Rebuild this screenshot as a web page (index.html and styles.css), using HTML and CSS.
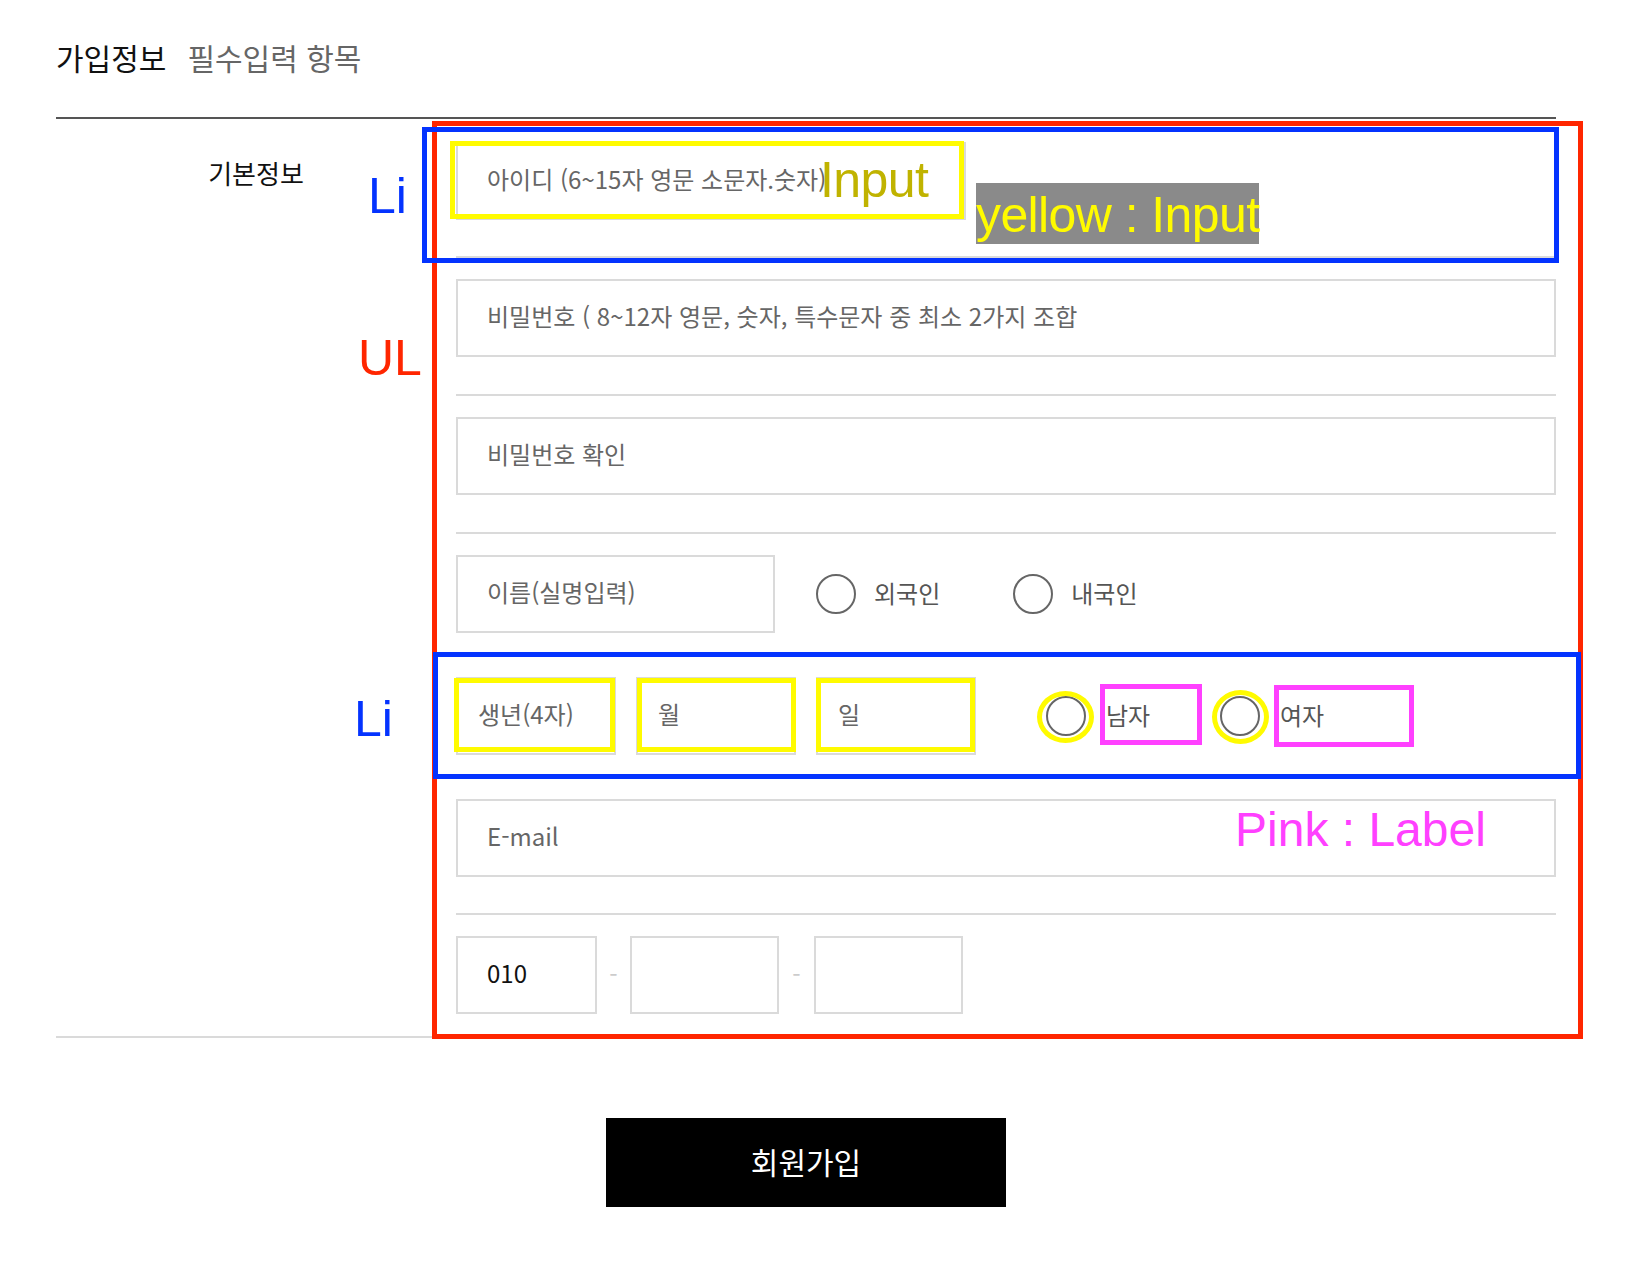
FILE: index.html
```html
<!DOCTYPE html>
<html lang="ko">
<head>
  <meta charset="UTF-8">
  <title>회원가입</title>
  <link rel="stylesheet" href="styles.css">
</head>
<body>
  <div class="join">
    <h2 class="join-head">가입정보<span>필수입력 항목</span></h2>

    <div class="join-form">
      <h3 class="form-title">기본정보</h3>
      <ul class="form-list">
        <li class="row-id">
          <input type="text" class="field field-id" placeholder="아이디 (6~15자 영문 소문자.숫자)">
        </li>
        <li>
          <input type="password" class="field field-full" placeholder="비밀번호 ( 8~12자 영문, 숫자, 특수문자 중 최소 2가지 조합">
        </li>
        <li>
          <input type="password" class="field field-full" placeholder="비밀번호 확인">
        </li>
        <li class="row-short">
          <input type="text" class="field field-name" placeholder="이름(실명입력)">
          <label class="choice"><input type="radio" name="nation" class="radio">외국인</label>
          <label class="choice choice-next"><input type="radio" name="nation" class="radio">내국인</label>
        </li>
        <li class="row-short">
          <input type="text" class="field field-birth" placeholder="생년(4자)">
          <input type="text" class="field field-birth" placeholder="월">
          <input type="text" class="field field-birth" placeholder="일">
          <input type="radio" name="gender" id="male" class="radio radio-male">
          <label for="male" class="gender-label">남자</label>
          <input type="radio" name="gender" id="female" class="radio radio-female">
          <label for="female" class="gender-label">여자</label>
        </li>
        <li class="row-mail">
          <input type="email" class="field field-full" placeholder="E-mail">
        </li>
        <li class="row-last">
          <input type="tel" class="field field-tel1" value="010">
          <span class="dash">-</span>
          <input type="tel" class="field field-tel">
          <span class="dash dash-wide">-</span>
          <input type="tel" class="field field-tel">
        </li>
      </ul>
    </div>

    <button type="button" class="join-submit">회원가입</button>
  </div>

  <!-- annotation marks drawn over the form -->
  <div class="mark mark-ul"></div>
  <div class="mark mark-li1"></div>
  <div class="mark mark-li2"></div>
  <div class="mark mark-yellow mark-id"></div>
  <div class="mark mark-yellow mark-birth1"></div>
  <div class="mark mark-yellow mark-birth2"></div>
  <div class="mark mark-yellow mark-birth3"></div>
  <div class="mark mark-ring mark-ring1"></div>
  <div class="mark mark-ring mark-ring2"></div>
  <div class="mark mark-pink mark-label1"></div>
  <div class="mark mark-pink mark-label2"></div>

  <div class="tag tag-li1">Li</div>
  <div class="tag tag-ul">UL</div>
  <div class="tag tag-li2">Li</div>
  <div class="tag tag-input">Input</div>
  <div class="tag tag-yellow">yellow : Input</div>
  <div class="tag tag-pink">Pink : Label</div>
</body>
</html>
```

FILE: styles.css
```css
body {
  margin: 0;
  font-family: "Noto Sans CJK KR", "Noto Sans", sans-serif;
  color: #111;
  background: #fff;
}
.join {
  width: 1500px;
  margin-left: 56px;
  padding-top: 1px;
}
.join-head {
  margin: 36px 0 40px;
  font-size: 30px;
  line-height: 40px;
  font-weight: 400;
  color: #111;
}
.join-head span {
  margin-left: 21px;
  color: #666;
}
.join-form {
  display: grid;
  grid-template-columns: 400px 1fr;
  border-top: 2px solid #555;
  border-bottom: 2px solid #dadada;
}
.form-title {
  margin: 0;
  padding-top: 39px;
  font-size: 26px;
  line-height: 30px;
  font-weight: 400;
  text-align: center;
}
.form-list {
  list-style: none;
  margin: 0;
  padding: 2px 0 0;
}
.form-list li {
  display: flex;
  align-items: center;
  padding: 21px 0 37px;
  border-bottom: 2px solid #dadada;
  font-size: 24px;
  color: #555;
}
.form-list li.row-id,
.form-list li.row-mail {
  padding-bottom: 36px;
}
.form-list li.row-short {
  padding-bottom: 21px;
}
.form-list li.row-last {
  padding-bottom: 22px;
  border-bottom: none;
}
.field {
  box-sizing: border-box;
  height: 78px;
  margin: 0;
  padding: 0 20px 6px 29px;
  border: 2px solid #dadada;
  background: #fff;
  font-family: inherit;
  font-size: 24px;
  color: #111;
  outline: none;
}
.field::placeholder {
  color: #666;
}
.field-id {
  width: 510px;
}
.field-full {
  width: 100%;
}
.field-name {
  width: 319px;
}
.field-birth {
  width: 160px;
  padding-left: 20px;
  margin-right: 20px;
}
.field-birth:nth-of-type(3) {
  margin-right: 0;
}
.field-tel1 {
  width: 141px;
}
.field-tel {
  width: 149px;
}
.dash {
  width: 33px;
  padding-bottom: 4px;
  text-align: center;
  color: #ccc;
}
.dash-wide {
  width: 35px;
}
.radio {
  appearance: none;
  -webkit-appearance: none;
  box-sizing: border-box;
  width: 40px;
  height: 40px;
  margin: 0;
  border: 2px solid #666;
  border-radius: 50%;
  background: #fff;
  flex-shrink: 0;
}
.choice {
  display: flex;
  align-items: center;
  gap: 18px;
  margin-left: 41px;
  padding-bottom: 4px;
}
.choice .radio {
  margin-top: 4px;
}
.choice-next {
  margin-left: 73px;
}
.radio-male {
  margin-left: 70px;
}
.radio-female {
  margin-left: 18px;
}
.gender-label {
  margin-left: 20px;
  width: 96px;
  padding-bottom: 4px;
}
.join-submit {
  display: block;
  width: 400px;
  height: 89px;
  margin: 80px auto 0;
  padding-bottom: 4px;
  border: none;
  background: #000;
  color: #fff;
  font-family: inherit;
  font-size: 30px;
  font-weight: 400;
  cursor: pointer;
}

/* annotation layer */
.mark {
  position: absolute;
  box-sizing: border-box;
  pointer-events: none;
}
.mark-ul {
  left: 432px;
  top: 121px;
  width: 1151px;
  height: 918px;
  border: 5px solid #ff2600;
}
.mark-li1 {
  left: 422px;
  top: 127px;
  width: 1137px;
  height: 136px;
  border: 5px solid #0433ff;
}
.mark-li2 {
  left: 433px;
  top: 652px;
  width: 1148px;
  height: 127px;
  border: 5px solid #0433ff;
}
.mark-yellow {
  border: 5px solid #fffb00;
}
.mark-id {
  left: 450px;
  top: 141px;
  width: 514px;
  height: 78px;
}
.mark-birth1 {
  left: 454px;
  top: 678px;
  width: 161px;
  height: 74px;
}
.mark-birth2 {
  left: 637px;
  top: 678px;
  width: 159px;
  height: 74px;
}
.mark-birth3 {
  left: 816px;
  top: 678px;
  width: 159px;
  height: 74px;
}
.mark-ring {
  border: 5px solid #fffb00;
  border-radius: 50%;
}
.mark-ring1 {
  left: 1037px;
  top: 691px;
  width: 57px;
  height: 52px;
}
.mark-ring2 {
  left: 1212px;
  top: 690px;
  width: 57px;
  height: 54px;
}
.mark-pink {
  border: 5px solid #ff40ff;
}
.mark-label1 {
  left: 1100px;
  top: 684px;
  width: 102px;
  height: 61px;
}
.mark-label2 {
  left: 1274px;
  top: 685px;
  width: 140px;
  height: 62px;
}
.tag {
  position: absolute;
  font-family: "Liberation Sans", Arial, sans-serif;
  font-size: 50px;
  line-height: 50px;
  white-space: nowrap;
}
.tag-li1 {
  left: 368px;
  top: 171px;
  color: #0433ff;
}
.tag-ul {
  left: 358px;
  top: 333px;
  color: #ff2600;
}
.tag-li2 {
  left: 354px;
  top: 694px;
  color: #0433ff;
}
.tag-input {
  left: 820px;
  top: 155px;
  color: #c0b300;
  letter-spacing: -0.6px;
}
.tag-yellow {
  left: 976px;
  top: 183px;
  padding-top: 4px;
  line-height: 57px;
  background: #8a8a8a;
  color: #fffb00;
  letter-spacing: -0.6px;
}
.tag-pink {
  left: 1235px;
  top: 806px;
  font-size: 48px;
  line-height: 48px;
  color: #ff40ff;
}
```
